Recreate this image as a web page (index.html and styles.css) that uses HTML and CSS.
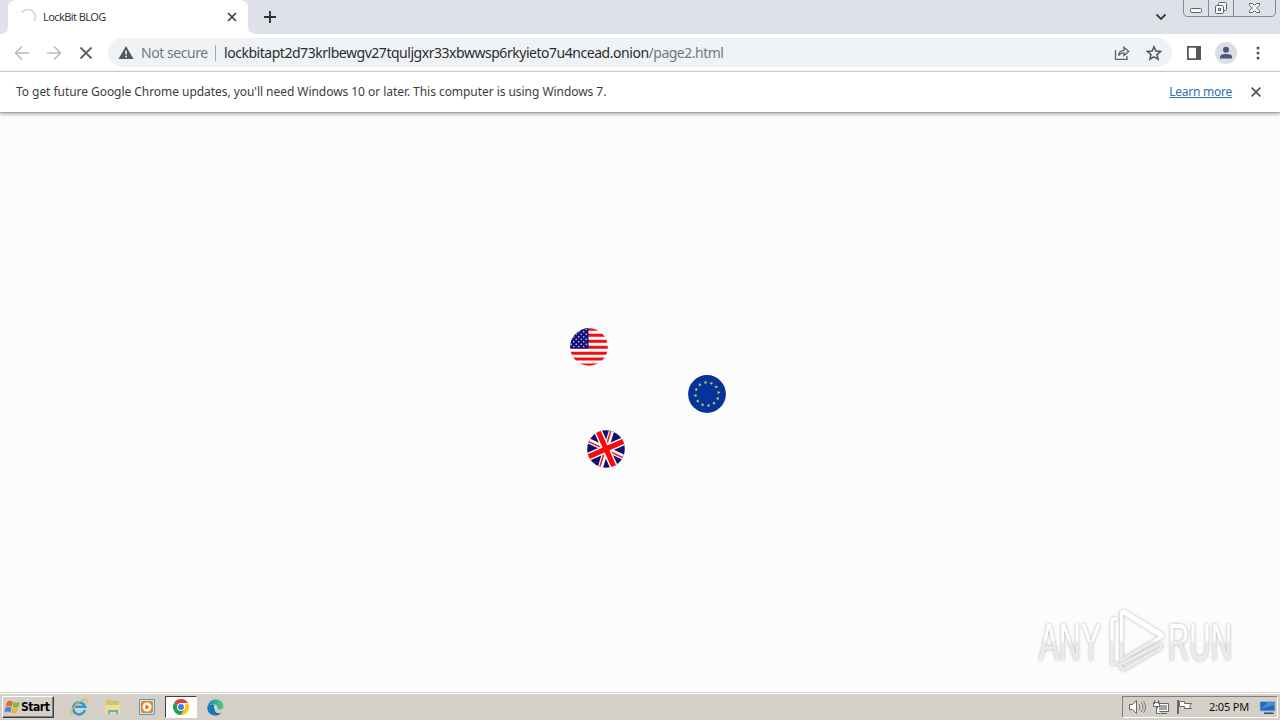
FILE: index.html
```html
<!DOCTYPE html>
<html lang="en">
<head>
<meta charset="utf-8">
<title>LockBit BLOG</title>
<link rel="stylesheet" href="styles.css">
</head>
<body>
<div class="screen">
  <header class="tabstrip">
    <svg class="tab-shape" width="264" height="34" viewBox="0 0 264 34"><path fill="#fff" d="M0 34Q8 34 8 26V8Q8 0 16 0H240Q248 0 248 8V26Q248 34 256 34Z"/></svg>
    <div class="tab">
      <svg width="16" height="16" viewBox="0 0 16 16"><path d="M2 3.500A7 7 0 0 1 14 12" fill="none" stroke="#d3d5f3" stroke-width="1.800"/></svg>
      <span class="tab-title">LockBit BLOG</span>
      <svg width="10" height="10" viewBox="0 0 10 10"><path d="M1 1l8 8M9 1l-8 8" stroke="#3c4043" stroke-width="1.700"/></svg>
    </div>
    <svg class="new-tab" width="12" height="12" viewBox="0 0 12 12"><path d="M6 0v12M0 6h12" stroke="#303238" stroke-width="1.900"/></svg>
    <svg class="chevron" width="12" height="8" viewBox="0 0 12 8"><path d="M1.500 1.500L6 6l4.500-4.500" fill="none" stroke="#3c4043" stroke-width="1.900"/></svg>
    <svg class="window-buttons" width="94" height="18" viewBox="0 0 94 18">
      <path d="M.5 0V12Q.5 16.500 5 16.500H88Q92.500 16.500 92.500 12V0M25.500 0V16M50.500 0V16" fill="none" stroke="#858990"/>
      <g fill="#f7f8fa" stroke="#60646b"><rect x="7.500" y="8.500" width="11" height="4" rx="1"/><rect x="35.500" y="2.500" width="8" height="8" rx="1"/><rect x="32.500" y="5.500" width="8" height="8" rx="1"/><rect x="35.500" y="8.500" width="2" height="2"/><path d="M66.500 3.500h3l2 2 2-2h3v2l-3 2.500 3 2.500v2h-3l-2-2-2 2h-3v-2l3-2.500-3-2.500z"/></g>
    </svg>
  </header>

  <nav class="toolbar">
    <svg class="nav-icons" width="80" height="18" viewBox="0 0 80 18" fill="none" stroke-width="1.600">
      <path d="M15 9H2M8 2.500L1.500 9 8 15.500M33 9h13M40 2.500L46.500 9 40 15.500" stroke="#b9bbbf"/>
      <path d="M66.500 3.500l11 11M77.500 3.500l-11 11" stroke="#606367" stroke-width="1.800"/>
    </svg>
    <div class="omnibox">
      <svg width="16" height="14" viewBox="0 0 16 14"><path d="M8 0L15.500 13H.5Z" fill="#54575b"/><path d="M8 4.500V8.500M8 9.700v1.700" stroke="#f1f3f4" stroke-width="1.600"/></svg>
      <span class="security">Not secure</span>
      <span class="divider"></span>
      <span class="url"><span class="host">lockbitapt2d73krlbewgv27tquljgxr33xbwwsp6rkyieto7u4ncead.onion</span><span class="path">/page2.html</span></span>
      <svg class="share" width="16" height="16" viewBox="0 0 16 16" fill="none" stroke="#5f6368" stroke-width="1.300"><path d="M1.500 5v9.300h11.500V11"/><path d="M4.500 10.500C5 7 7 5.500 10 5.300V2.300L14.700 6.500 10 10.500V7.800C7.500 7.700 6 8.500 4.500 10.500Z"/></svg>
      <svg class="star" width="16" height="16" viewBox="0 0 16 16" fill="none" stroke="#4f5358" stroke-width="1.500"><path d="M8 1.800l1.900 4.300 4.700.4-3.600 3.100 1.100 4.600L8 11.800l-4.100 2.400L5 9.600 1.400 6.500l4.700-.4Z"/></svg>
    </div>
    <svg class="panel" width="14" height="14" viewBox="0 0 14 14"><path fill="#55585d" fill-rule="evenodd" d="M0 0h14v14H0ZM1.800 1.800v10.400H9V1.800Z"/></svg>
    <svg class="profile" width="22" height="22" viewBox="0 0 22 22"><circle cx="11" cy="11" r="11" fill="#dadee6"/><circle cx="11" cy="7.800" r="3" fill="#4c5878"/><path d="M5 16.500v-1.700C5 12.700 8 12 11 12s6 .7 6 2.800v1.700Z" fill="#4c5878"/></svg>
    <svg class="more" width="4" height="14" viewBox="0 0 4 14" fill="#505357"><circle cx="2" cy="2" r="1.500"/><circle cx="2" cy="7" r="1.500"/><circle cx="2" cy="12" r="1.500"/></svg>
  </nav>

  <div class="infobar">
    <span class="notice">To get future Google Chrome updates, you'll need Windows 10 or later. This computer is using Windows 7.</span>
    <a class="learn" href="#">Learn more</a>
    <svg width="10" height="10" viewBox="0 0 10 10"><path d="M.7.700l8.600 8.600M9.300.700L.7 9.300" stroke="#55585c" stroke-width="1.800"/></svg>
  </div>

  <main class="page">
    <svg class="flag us" width="38" height="38" viewBox="0 0 38 38">
      <defs>
        <clipPath id="disc"><circle cx="19" cy="19" r="18.800"/></clipPath>
        <pattern id="stars" width="5" height="5" patternUnits="userSpaceOnUse"><circle cx="1.200" cy="1.200" r=".75" fill="#e4e4ff"/><circle cx="3.700" cy="3.700" r=".75" fill="#e4e4ff"/></pattern>
      </defs>
      <g clip-path="url(#disc)"><path fill="#fff" d="M0 0h38v38H0z"/><path stroke="#f20d12" stroke-width="2.900" d="M0 1.200h38M0 7.200h38M0 13.200h38M0 19.200h38M0 25.200h38M0 31h38M0 37h38"/><path fill="#14147c" d="M0 0h18.500v20.500H0z"/><path fill="url(#stars)" d="M0 1h17.500v18.500H0z"/></g>
    </svg>
    <svg class="flag eu" width="38" height="38" viewBox="0 0 38 38">
      <circle cx="19" cy="19" r="18.900" fill="#06339a"/>
      <g fill="#c5d64b"><path id="s" d="M17.500 5.600l.5 1.200 1.300.1-1 .8.400 1.300-1.200-.7-1.100.7.300-1.300-1-.8 1.300-.1z"/><use href="#s" transform="rotate(30 19 19)"/><use href="#s" transform="rotate(60 19 19)"/><use href="#s" transform="rotate(90 19 19)"/><use href="#s" transform="rotate(120 19 19)"/><use href="#s" transform="rotate(150 19 19)"/><use href="#s" transform="rotate(180 19 19)"/><use href="#s" transform="rotate(210 19 19)"/><use href="#s" transform="rotate(240 19 19)"/><use href="#s" transform="rotate(270 19 19)"/><use href="#s" transform="rotate(300 19 19)"/><use href="#s" transform="rotate(330 19 19)"/></g>
    </svg>
    <svg class="flag uk" width="38" height="38" viewBox="0 0 38 38">
      <g clip-path="url(#disc)"><g transform="rotate(-24 19 19)"><path fill="#11106f" d="M-10-10h58v58h-58z"/><path stroke="#fff" stroke-width="5.200" d="M-1-4l40 46M39-4L-1 42"/><path stroke="#f0202b" stroke-width="1.600" d="M-1-3l40 46M39-5L-1 41"/><path stroke="#fff" stroke-width="8" d="M19-5v48M-5 19h48"/><path stroke="#fa0909" stroke-width="5.200" d="M19-5v48M-5 19h48"/></g></g>
    </svg>
    <svg class="watermark" width="220" height="80" viewBox="0 0 220 80">
      <defs>
        <linearGradient id="fade" x1="0" y1="10" x2="0" y2="70" gradientUnits="userSpaceOnUse"><stop offset="0" stop-color="#fff"/><stop offset=".5" stop-color="#fff"/><stop offset=".54" stop-color="#ebebeb"/><stop offset="1" stop-color="#ececec"/></linearGradient>
        <filter id="glow" x="-10%" y="-20%" width="120%" height="140%"><feDropShadow dx="0" dy="0" stdDeviation="1.700" flood-color="#777" flood-opacity=".6"/></filter>
      </defs>
      <g filter="url(#glow)" fill="url(#fade)">
        <text class="mark" x="14" y="60" textLength="62" lengthAdjust="spacingAndGlyphs">ANY</text>
        <text class="mark" x="143" y="60" textLength="64" lengthAdjust="spacingAndGlyphs">RUN</text>
        <g fill="none" stroke="url(#fade)" stroke-width="3" stroke-linejoin="round"><path d="M96.500 12v48L137 36.500Z"/><path d="M92 18l-5 2v44l6-1"/><path d="M94 65l4 5 38-22v-4L94 65M97 12l2-1 38 23v4"/></g>
      </g>
    </svg>
  </main>

  <footer class="taskbar">
    <div class="start">
      <svg width="17" height="17" viewBox="0 0 17 17"><path d="M3 3q3-2.500 6 0L7.700 8q-3-2-6 0z" fill="#e96827"/><path d="M9.800 3q3 1.500 6.200 0l-1.500 5q-3 1.500-6 0z" fill="#7cb64d"/><path d="M1.400 9q3-2 6 0L6.200 13.500q-3-2-6 0z" fill="#4385ce"/><path d="M8.200 9q3 1.500 6 0L13 13.500q-3 1.500-6 0z" fill="#f3b527"/></svg>
      <span>Start</span>
    </div>
    <div class="launchers">
      <span class="launcher"><svg width="18" height="18" viewBox="0 0 18 18" fill="none"><path d="M15 12A6 6 0 1 1 15 8.800H5" stroke="#279dd9" stroke-width="2.600"/><path d="M4 16C-3 17 6 3 15 1.500 18 1 17 4 16 5.500" stroke="#dfb850" stroke-width="1.300"/></svg></span>
      <span class="launcher"><svg width="18" height="18" viewBox="0 0 18 18"><path d="M2 4V2h5l1 1h7v13H2z" fill="#e5bc57"/><path d="M3 5h11v5H3z" fill="#9bd6a3"/><path d="M1 7h15v9H1z" fill="#f7dc87"/><path d="M4 16v-4h10v4h-2v-2H6v2z" fill="#5caee0"/></svg></span>
      <span class="launcher"><svg width="18" height="18" viewBox="0 0 18 18"><path d="M1.500 1.500h15v15h-15z" fill="#c9e5f5" stroke="#5698c8"/><rect x="3" y="3" width="12" height="12" rx="2" fill="#ed8516"/><circle cx="9" cy="9" r="4.500" fill="#fff"/><path d="M7.500 6.200v5.600L11.600 9z" fill="#e46b0c"/></svg></span>
      <span class="launcher active"><svg width="16" height="16" viewBox="0 0 16 16"><path d="M8 8L1.070 4A8 8 0 0 1 14.930 4H8Z" fill="#e43c2e"/><path d="M8 8l6.930-4A8 8 0 0 1 8 16l3.500-6Z" fill="#fbc614"/><path d="M1.070 4A8 8 0 0 0 8 16l3.500-6L8 8Z" fill="#249b4d"/><circle cx="8" cy="8" r="4" fill="#fff"/><circle cx="8" cy="8" r="3" fill="#3f7de3"/></svg></span>
      <span class="launcher"><svg width="17" height="17" viewBox="0 0 17 17"><defs><linearGradient id="edge"><stop stop-color="#1686cc"/><stop offset="1" stop-color="#57cd72"/></linearGradient></defs><path d="M.5 8.500a8 8 0 0 0 14 5.200C11 15 9 14 8 12L6 6Z" fill="#1462ad"/><path d="M.5 8.500C1-2 16-2 16.500 7c0 4-5 4.500-6 2.500C11 7 9 5 6 5 3 5 1 7 .5 8.500Z" fill="url(#edge)"/><path d="M.5 8.500C2 5 6 4.500 8 6c-4 2-2 8 3 9-5 3-11-1-10.500-6.500Z" fill="#1478c0"/></svg></span>
    </div>
    <div class="tray">
      <svg width="68" height="18" viewBox="0 0 68 18" fill="#fff" stroke="#66676a">
        <path d="M.5 6.500h3l4-4v13l-4-4h-3z"/><path d="M10 6q2 3 0 6M12 4q4 5 0 10M14.500 3q4 6 0 12" fill="none" stroke="#7b7c7e"/>
        <path d="M28.500 5.500h11v8h-11z"/><path d="M30 7h8v5h-8z" fill="#a1a3a5" stroke="none"/><path d="M32 15.500h6M25.500 2v4M29.500 2v4M24.500 4.500h6v4h-6zM27.500 9v6.500h4"/>
        <path d="M49 2v14" stroke-width="2"/><path d="M50.500 3.500h5v2h7l-2 3 2 2h-7v-2h-5z"/>
      </svg>
      <time>2:05 PM</time>
      <svg class="desktop" width="17" height="15" viewBox="0 0 17 15"><path d="M1 1.500h15v9.500H1z" fill="#2367bc" stroke="#8eb5db"/><path d="M2 9l7-7h6.500v3z" fill="#498bd4"/><path d="M5 12.500h9l1 1.500H5z" fill="#334b6b"/></svg>
    </div>
  </footer>
</div>
</body>
</html>
```
FILE: styles.css
```css
* { box-sizing: border-box; }
body { margin: 0; overflow: hidden; font-family: "Noto Sans", "Open Sans", sans-serif; }
svg { display: block; flex: none; }
.screen { width: 1280px; height: 720px; display: flex; flex-direction: column; background: #fcfcfc; }
.tabstrip { height: 34px; flex: none; display: flex; align-items: center; position: relative; background: #dee1e8; }
.tab-shape { position: absolute; left: 0; top: 0; }
.tab { position: relative; width: 248px; padding: 0 11px 0 20px; display: flex; align-items: center; }
.tab-title { margin: -2px auto 0 7px; font-size: 11px; letter-spacing: -.58px; color: #36383c; white-space: nowrap; }
.new-tab { margin-left: 16px; }
.chevron { margin-left: auto; }
.window-buttons { align-self: flex-start; margin: 0 3px 0 16px; }
.toolbar { height: 38px; flex: none; display: flex; align-items: center; padding: 0 20px 0 14px; background: #fff; border-bottom: 1px solid #d8dade; }
.omnibox { margin-left: 14px; width: 1064px; height: 29px; border-radius: 15px; background: #f0f3f5; display: flex; align-items: center; padding: 0 10px; font-size: 14px; white-space: nowrap; }
.security { margin-left: 7px; width: 68px; color: #74787d; letter-spacing: -.45px; }
.divider { width: 1px; height: 16px; margin: 0 8px 0 6px; background: #a2a6aa; }
.url { color: #2a2c30; }
.host { letter-spacing: -.465px; }
.path { color: #74787d; letter-spacing: -.5px; }
.share { margin-left: auto; }
.star { margin: 0 0 0 16px; }
.panel { margin-left: 15px; }
.profile { margin-left: 14px; }
.more { margin-left: auto; }
.infobar { position: relative; z-index: 1; height: 41px; flex: none; display: flex; align-items: center; padding: 0 19px 1px 16px; background: #fff; border-bottom: 1px solid #a8a8a8; box-shadow: 0 1px 4px rgba(0,0,0,.35); font-size: 12px; white-space: nowrap; }
.notice { color: #3b3d41; letter-spacing: -.05px; }
.learn { margin: 0 19px 0 auto; color: #2f6fb6; letter-spacing: -.25px; text-decoration: underline; }
.page { position: relative; flex: 1; background: #fcfcfc; }
.flag { position: absolute; }
.us { left: 570px; top: 215px; }
.eu { left: 688px; top: 262px; }
.uk { left: 587px; top: 317px; }
.watermark { position: absolute; left: 1025px; top: 487px; overflow: visible; }
.mark { font-family: "Liberation Sans", sans-serif; font-size: 52px; }
.taskbar { height: 28px; flex: none; display: flex; align-items: center; padding: 3px 2px 2px; background: #d4d0c8; border-top: 1px solid #d4d0c8; box-shadow: inset 0 1px #fff; }
.start { width: 52px; height: 22px; display: flex; align-items: center; gap: 0; padding-left: 1px; border: 1px solid; border-color: #fff #404040 #404040 #fff; box-shadow: inset -1px -1px #808080; font: bold 12px "DejaVu Sans Condensed", "DejaVu Sans", sans-serif; letter-spacing: -.45px; color: #000; }
.launchers { display: flex; gap: 2px; margin-left: 9px; }
.launcher { width: 32px; height: 22px; display: flex; align-items: center; justify-content: center; }
.active { background: #fff; border: 1px solid; border-color: #404040 #fff #fff #404040; }
.tray { margin-left: auto; width: 156px; height: 22px; display: flex; align-items: center; padding-left: 6px; border: 1px solid; border-color: #808080 #fff #fff #808080; }
time { margin: -2px 0 0 12px; width: 41px; font-size: 11px; letter-spacing: -.2px; color: #111; white-space: nowrap; }
.desktop { margin-left: 9px; }
```
